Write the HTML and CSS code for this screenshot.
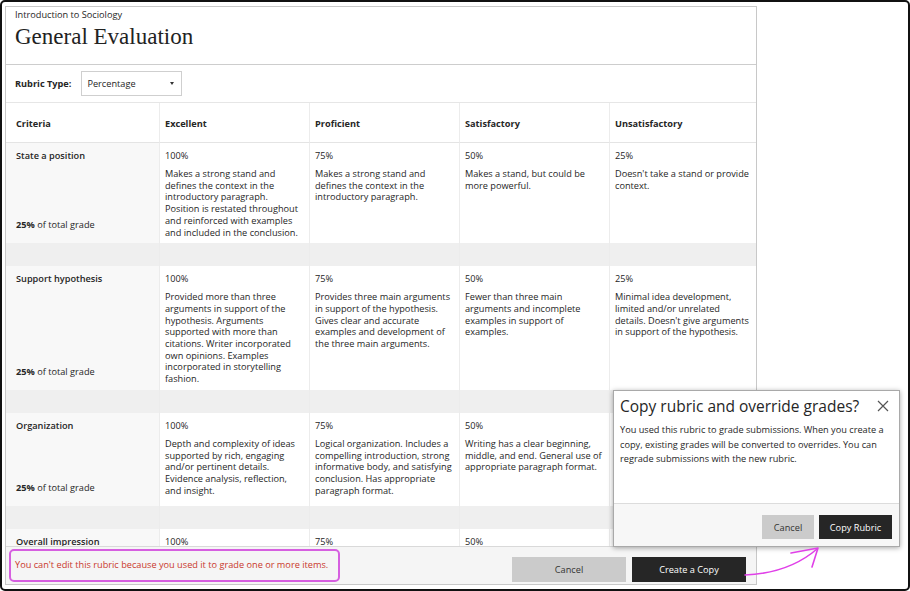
FILE: index.html
```html
<!DOCTYPE html>
<html>
<head>
<meta charset="utf-8">
<link rel="stylesheet" href="styles.css">
</head>
<body>
<div class="frame">
  <div class="panel">
    <header class="head">
      <div class="course">Introduction to Sociology</div>
      <h1 class="title">General Evaluation</h1>
    </header>
    <div class="typebar">
      <span class="typelabel">Rubric Type:</span>
      <div class="select"><span>Percentage</span><span class="caret"></span></div>
    </div>
    <div class="tablewrap">
      <div class="trow thead">
        <div>Criteria</div><div>Excellent</div><div>Proficient</div><div>Satisfactory</div><div>Unsatisfactory</div>
      </div>
      <div class="trow">
        <div class="crit"><span>State a position</span><span><b>25%</b> of total grade</span></div>
        <div class="level"><div class="pct">100%</div><div class="desc">Makes a strong stand and<br>defines the context in the<br>introductory paragraph.<br>Position is restated throughout<br>and reinforced with examples<br>and included in the conclusion.</div></div>
        <div class="level"><div class="pct">75%</div><div class="desc">Makes a strong stand and<br>defines the context in the<br>introductory paragraph.</div></div>
        <div class="level"><div class="pct">50%</div><div class="desc">Makes a stand, but could be<br>more powerful.</div></div>
        <div class="level"><div class="pct">25%</div><div class="desc">Doesn't take a stand or provide<br>context.</div></div>
      </div>
      <div class="trow band"><div></div><div></div><div></div><div></div><div></div></div>
      <div class="trow">
        <div class="crit"><span>Support hypothesis</span><span><b>25%</b> of total grade</span></div>
        <div class="level"><div class="pct">100%</div><div class="desc">Provided more than three<br>arguments in support of the<br>hypothesis. Arguments<br>supported with more than<br>citations. Writer incorporated<br>own opinions. Examples<br>incorporated in storytelling<br>fashion.</div></div>
        <div class="level"><div class="pct">75%</div><div class="desc">Provides three main arguments<br>in support of the hypothesis.<br>Gives clear and accurate<br>examples and development of<br>the three main arguments.</div></div>
        <div class="level"><div class="pct">50%</div><div class="desc">Fewer than three main<br>arguments and incomplete<br>examples in support of<br>examples.</div></div>
        <div class="level"><div class="pct">25%</div><div class="desc">Minimal idea development,<br>limited and/or unrelated<br>details. Doesn't give arguments<br>in support of the hypothesis.</div></div>
      </div>
      <div class="trow band"><div></div><div></div><div></div><div></div><div></div></div>
      <div class="trow tall">
        <div class="crit"><span>Organization</span><span><b>25%</b> of total grade</span></div>
        <div class="level"><div class="pct">100%</div><div class="desc">Depth and complexity of ideas<br>supported by rich, engaging<br>and/or pertinent details.<br>Evidence analysis, reflection,<br>and insight.</div></div>
        <div class="level"><div class="pct">75%</div><div class="desc">Logical organization. Includes a<br>compelling introduction, strong<br>informative body, and satisfying<br>conclusion. Has appropriate<br>paragraph format.</div></div>
        <div class="level"><div class="pct">50%</div><div class="desc">Writing has a clear beginning,<br>middle, and end. General use of<br>appropriate paragraph format.</div></div>
        <div class="level"></div>
      </div>
      <div class="trow band"><div></div><div></div><div></div><div></div><div></div></div>
      <div class="trow">
        <div class="crit"><span>Overall impression</span></div>
        <div class="level"><div class="pct">100%</div></div>
        <div class="level"><div class="pct">75%</div></div>
        <div class="level"><div class="pct">50%</div></div>
        <div class="level"></div>
      </div>
    </div>
    <footer class="foot">
      <p class="msg">You can't edit this rubric because you used it to grade one or more items.</p>
      <div class="actions">
        <button class="btn grey">Cancel</button>
        <button class="btn dark">Create a Copy</button>
      </div>
    </footer>
  </div>

  <div class="dialog">
    <div class="dlg-head">
      <h2 class="dlg-title">Copy rubric and override grades?</h2>
      <svg class="close" width="12" height="12" viewBox="0 0 12 12"><path d="M1 1L11 11M11 1L1 11" stroke="#555" stroke-width="1.2" fill="none"/></svg>
    </div>
    <p class="dlg-body">You used this rubric to grade submissions. When you create a<br>copy, existing grades will be converted to overrides. You can<br>regrade submissions with the new rubric.</p>
    <div class="dlg-foot">
      <button class="dbtn grey">Cancel</button>
      <button class="dbtn dark">Copy Rubric</button>
    </div>
  </div>

  <svg class="arrow" width="910" height="591" viewBox="0 0 910 591">
    <path d="M745 575 C768 574 795 568 817 549" stroke="#e040e8" stroke-width="1.6" fill="none" stroke-linecap="round"/>
    <path d="M791 553 L818 548 L812 567" stroke="#e040e8" stroke-width="1.6" fill="none" stroke-linecap="round" stroke-linejoin="round"/>
  </svg>
</div>
</body>
</html>
```

FILE: styles.css
```css
body {
  margin: 0;
  font-family: "Open Sans", "Noto Sans", sans-serif;
  color: #262626;
}

.frame {
  position: relative;
  width: 910px;
  height: 591px;
  box-sizing: border-box;
  border: 2px solid #111;
  border-radius: 5px;
  padding: 4px 0 0 3px;
  background: #fff;
  overflow: hidden;
}

.panel {
  width: 752px;
  height: 579px;
  box-sizing: border-box;
  border: 1px solid #c8c8c8;
  display: flex;
  flex-direction: column;
  background: #fff;
}

.head {
  flex: none;
  padding: 2px 9px 13px;
  border-bottom: 1px solid #cdcdcd;
}

.course {
  font-size: 9.2px;
  line-height: 12px;
}

.title {
  margin: 2px 0 0;
  font: 400 23px/28px "Liberation Serif", serif;
  color: #222;
}

.typebar {
  flex: none;
  height: 37px;
  display: flex;
  align-items: center;
  gap: 10px;
  padding-left: 9px;
  border-bottom: 1px solid #e6e6e6;
  font-size: 9.2px;
}

.typelabel {
  font-weight: 700;
}

.select {
  width: 101px;
  height: 25px;
  box-sizing: border-box;
  border: 1px solid #cfcfcf;
  display: flex;
  align-items: center;
  justify-content: space-between;
  padding: 0 7px 0 5px;
}

.caret {
  width: 0;
  height: 0;
  border-left: 2.5px solid transparent;
  border-right: 2.5px solid transparent;
  border-top: 3px solid #333;
}

.tablewrap {
  flex: 1;
  overflow: hidden;
  font-size: 9.2px;
}

.trow {
  display: grid;
  grid-template-columns: 153px 150px 150px 150px 147px;
}

.trow > div + div {
  border-left: 1px solid #ececec;
}

.thead > div {
  height: 40px;
  box-sizing: border-box;
  padding: 15px 5px 0;
  font-weight: 700;
  line-height: 12px;
  border-bottom: 1px solid #e4e4e4;
}

.thead > div:first-child {
  padding-left: 10px;
}

.crit {
  background: #f8f8f8;
  padding: 7px 4px 12px 10px;
  display: flex;
  flex-direction: column;
  justify-content: space-between;
  line-height: 12px;
  font-weight: 600;
}

.crit b {
  font-weight: 700;
}

.crit span + span {
  font-weight: 400;
}

.level {
  padding: 7px 0 5px 5px;
}

.pct {
  line-height: 12px;
}

.desc {
  margin-top: 6px;
  line-height: 11.7px;
}

.tall {
  min-height: 93px;
}

.band {
  height: 23px;
  background: #efefef;
}

.foot {
  flex: none;
  height: 38px;
  box-sizing: border-box;
  border-top: 1px solid #d9d9d9;
  background: #f5f5f5;
  display: flex;
  justify-content: space-between;
  align-items: flex-start;
  padding: 2px 10px 0 3px;
}

.msg {
  margin: 0;
  border: 2px solid #d65fe0;
  border-radius: 5px;
  padding: 8px 10px 9px 4px;
  color: #c9382c;
  font-size: 9.2px;
  line-height: 12px;
}

.actions {
  display: flex;
  gap: 6px;
  margin-top: 8px;
}

.btn, .dbtn {
  border: 0;
  padding: 0;
  font-family: "Open Sans", sans-serif;
  font-size: 9.2px;
}

.btn {
  width: 114px;
  height: 25px;
}

.grey {
  background: #cbcbcb;
  color: #333;
}

.dark {
  background: #262626;
  color: #fff;
}

.dialog {
  position: absolute;
  left: 611px;
  top: 388px;
  width: 287px;
  height: 157px;
  box-sizing: border-box;
  border: 1px solid #a9a9a9;
  background: #fff;
  box-shadow: 0 1px 5px rgba(0, 0, 0, 0.35);
  display: flex;
  flex-direction: column;
}

.dlg-head {
  display: flex;
  justify-content: space-between;
  align-items: center;
  padding: 5px 10px 0 6px;
}

.dlg-title {
  margin: 0;
  font-size: 15.5px;
  line-height: 20px;
  font-weight: 400;
  color: #262626;
}

.dlg-body {
  flex: 1;
  margin: 0;
  padding: 7px 6px 0;
  font-size: 9.2px;
  line-height: 14.5px;
}

.dlg-foot {
  flex: none;
  height: 43px;
  box-sizing: border-box;
  border-top: 1px solid #dcdcdc;
  background: #f7f7f7;
  display: flex;
  justify-content: flex-end;
  gap: 5px;
  padding: 11px 7px 0;
}

.dbtn {
  height: 24px;
}

.dbtn.grey {
  width: 52px;
}

.dbtn.dark {
  width: 73px;
}

.arrow {
  position: absolute;
  left: -2px;
  top: -2px;
  pointer-events: none;
}
```
